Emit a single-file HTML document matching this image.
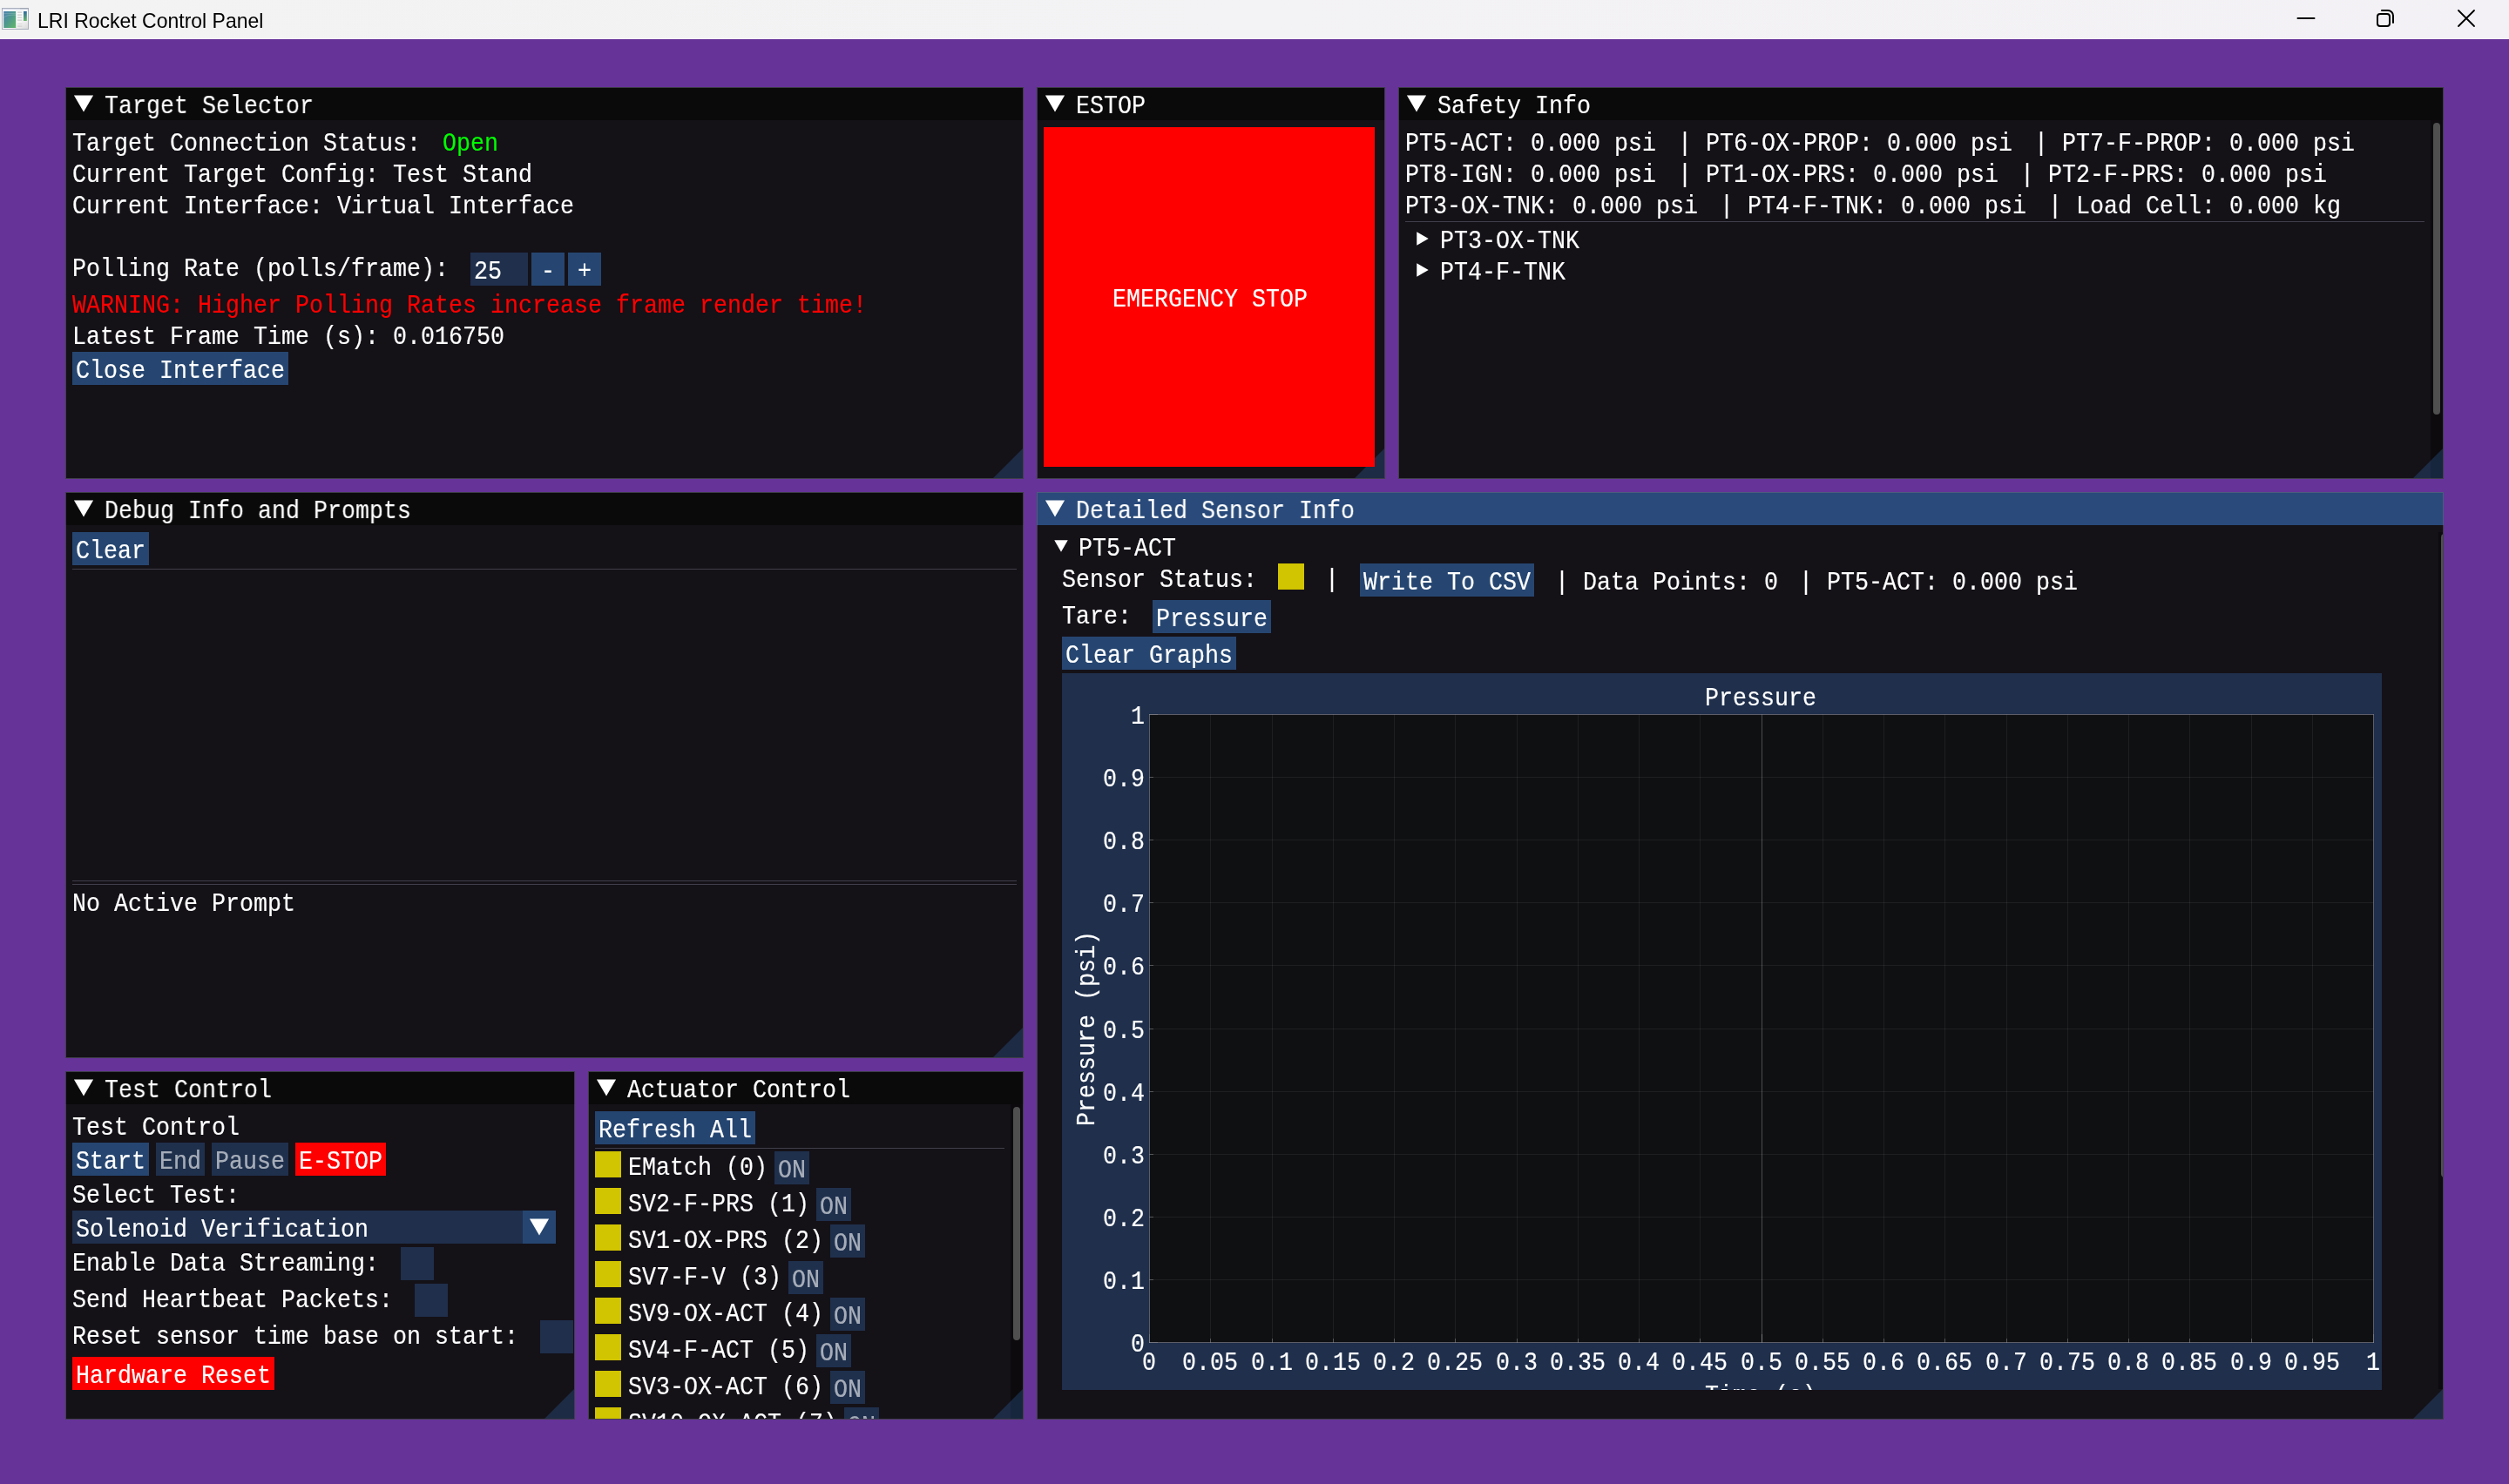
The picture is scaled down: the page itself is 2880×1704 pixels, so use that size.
<!DOCTYPE html>
<html><head><meta charset="utf-8"><title>LRI Rocket Control Panel</title><style>
html,body{margin:0;padding:0}
body{width:2880px;height:1704px;overflow:hidden;background:#663399;position:relative;font-family:"Liberation Mono",monospace}
div,span,svg{position:absolute;display:block}
#root{left:0;top:0;width:2880px;height:1704px;will-change:transform}
.win{background:rgba(15,15,15,.94)}
.clip{overflow:hidden}
.t{font-family:"Liberation Mono",monospace;font-size:30px;line-height:32px;height:32px;white-space:pre;color:#fff;transform-origin:0 0;transform:scaleX(0.88874);-webkit-text-stroke:0.15px currentColor;letter-spacing:0}
.wt{font-family:"Liberation Sans",sans-serif;font-size:24px;line-height:32px;white-space:pre;color:#000;transform-origin:0 0;transform:scaleX(.958)}
</style></head><body>
<div id="root">
<div style="left:0px;top:0px;width:2880px;height:45px;background:linear-gradient(90deg,#f3f3f3,#f3f1f5);"></div>
<div style="left:0px;top:44px;width:2880px;height:1px;background:#f9f9f7;"></div>
<svg style="left:1px;top:8px" width="34" height="28" viewBox="0 0 34 28">
<defs><linearGradient id="g1" x1="0" y1="0" x2="1" y2="1"><stop offset="0" stop-color="#4a7fb0"/><stop offset=".5" stop-color="#4f9a8c"/><stop offset="1" stop-color="#62b866"/></linearGradient>
<linearGradient id="g2" x1="0" y1="0" x2="0" y2="1"><stop offset="0" stop-color="#2f6aa0"/><stop offset="1" stop-color="#66b86a"/></linearGradient>
<linearGradient id="g3" x1="0" y1="0" x2="1" y2="1"><stop offset="0" stop-color="#ffffff"/><stop offset=".6" stop-color="#fafafa"/><stop offset="1" stop-color="#d8d8d8"/></linearGradient></defs>
<rect x="1.5" y="1.5" width="30" height="24" fill="url(#g3)" stroke="#a9afbd" stroke-width="1"/>
<rect x="2" y="2" width="29" height="1.6" fill="#dfe3ee"/><rect x="22" y="1.2" width="9.5" height="1" fill="#9ea3b0"/>
<rect x="3.2" y="5" width="14" height="19" fill="url(#g1)"/>
<path d="M3.4 7.6 H17 M3.4 12.2 C6 9.6 10 9.2 17 9.2" stroke="rgba(255,255,255,.28)" stroke-width=".7" fill="none"/>
<rect x="26" y="5" width="3.8" height="11" fill="url(#g2)"/>
<g fill="#d4d4d6"><rect x="19" y="5.4" width="5.4" height="1.5"/><rect x="19" y="8.4" width="5.4" height="1.5"/><rect x="19" y="11.4" width="5.4" height="1.5"/><rect x="19" y="14.4" width="5.4" height="1.5"/><rect x="19" y="19" width="5.4" height=".8"/><rect x="19" y="21.4" width="5.4" height="1.5"/></g>
</svg>
<span class="wt" style="left:42.6px;top:8px">LRI Rocket Control Panel</span>
<svg style="left:2620px;top:0" width="260" height="45" fill="none" stroke="#000" stroke-width="2" stroke-linecap="round">
<path d="M17.5 21 H36.5"/>
<rect x="109" y="16" width="14" height="14" rx="3"/>
<path d="M114 12 h7 a6 6 0 0 1 6 6 v8"/>
<path d="M202 12 L220 30 M220 12 L202 30" stroke-width="1.8"/>
</svg>
<div class="win" style="left:75px;top:100px;width:1100px;height:450px"><div style="left:0px;top:0px;width:1100px;height:38px;background:#0a0a0a;"></div>
<svg style="left:8px;top:8px" width="26" height="22"><polygon points="13.00,20.60 1.92,1.40 24.08,1.40" fill="#fff"/></svg>
<span class="t" style="left:45.25px;top:5.6px;">Target Selector</span>
<div class="clip" style="left:1px;top:38px;width:1098px;height:411px"><svg style="left:1063px;top:376px" width="37" height="37"><polygon points="1.00,35.00 35.00,1.00 35.00,35.00" fill="rgba(66,150,250,.20)"/></svg>
<span class="t" style="left:7.25px;top:10.6px;">Target Connection Status: </span>
<span class="t" style="left:432.25px;top:10.6px;color:#00ff00;">Open</span>
<span class="t" style="left:7.25px;top:46.6px;">Current Target Config: Test Stand</span>
<span class="t" style="left:7.25px;top:82.6px;">Current Interface: Virtual Interface</span>
<span class="t" style="left:7.25px;top:154.6px;">Polling Rate (polls/frame): </span>
<div style="left:464px;top:152px;width:66px;height:38px;background:rgba(41,74,122,.54);"></div>
<span class="t" style="left:468.25px;top:157.6px;">25</span>
<div style="left:534px;top:152px;width:38px;height:38px;background:rgba(66,150,250,.40);"></div>
<span class="t" style="left:545.25px;top:157.6px;">-</span>
<div style="left:576px;top:152px;width:38px;height:38px;background:rgba(66,150,250,.40);"></div>
<span class="t" style="left:587.25px;top:157.6px;">+</span>
<span class="t" style="left:7.25px;top:196.6px;color:#ff0000;">WARNING: Higher Polling Rates increase frame render time!</span>
<span class="t" style="left:7.25px;top:232.6px;">Latest Frame Time (s): 0.016750</span>
<div style="left:7px;top:266px;width:248px;height:38px;background:rgba(66,150,250,.40);"></div>
<span class="t" style="left:11.25px;top:271.6px;">Close Interface</span></div>
<div style="left:0;top:0;width:1100px;height:450px;box-sizing:border-box;border:1px solid rgba(110,110,128,.5)"></div></div>
<div class="win" style="left:1190px;top:100px;width:400px;height:450px"><div style="left:0px;top:0px;width:400px;height:38px;background:#0a0a0a;"></div>
<svg style="left:8px;top:8px" width="26" height="22"><polygon points="13.00,20.60 1.92,1.40 24.08,1.40" fill="#fff"/></svg>
<span class="t" style="left:45.25px;top:5.6px;">ESTOP</span>
<div class="clip" style="left:1px;top:38px;width:398px;height:411px"><svg style="left:363px;top:376px" width="37" height="37"><polygon points="1.00,35.00 35.00,1.00 35.00,35.00" fill="rgba(66,150,250,.20)"/></svg>
<div style="left:7px;top:8px;width:380px;height:390px;background:#ff0000;"></div>
<span class="t" style="left:86.25px;top:189.6px;">EMERGENCY STOP</span></div>
<div style="left:0;top:0;width:400px;height:450px;box-sizing:border-box;border:1px solid rgba(110,110,128,.5)"></div></div>
<div class="win" style="left:1605px;top:100px;width:1200px;height:450px"><div style="left:0px;top:0px;width:1200px;height:38px;background:#0a0a0a;"></div>
<svg style="left:8px;top:8px" width="26" height="22"><polygon points="13.00,20.60 1.92,1.40 24.08,1.40" fill="#fff"/></svg>
<span class="t" style="left:45.25px;top:5.6px;">Safety Info</span>
<div class="clip" style="left:1px;top:38px;width:1198px;height:411px"><div style="left:1184px;top:0px;width:14px;height:411px;background:rgba(5,5,5,.53);"></div>
<div style="left:1187px;top:3px;width:8px;height:335px;background:#4f4f4f;border-radius:4px;"></div>
<svg style="left:1163px;top:376px" width="37" height="37"><polygon points="1.00,35.00 35.00,1.00 35.00,35.00" fill="rgba(66,150,250,.20)"/></svg>
<span class="t" style="left:7.25px;top:10.6px;">PT5-ACT: 0.000 psi </span>
<span class="t" style="left:320.25px;top:10.6px;">| PT6-OX-PROP: 0.000 psi </span>
<span class="t" style="left:729.25px;top:10.6px;">| PT7-F-PROP: 0.000 psi</span>
<span class="t" style="left:7.25px;top:46.6px;">PT8-IGN: 0.000 psi </span>
<span class="t" style="left:320.25px;top:46.6px;">| PT1-OX-PRS: 0.000 psi </span>
<span class="t" style="left:713.25px;top:46.6px;">| PT2-F-PRS: 0.000 psi</span>
<span class="t" style="left:7.25px;top:82.6px;">PT3-OX-TNK: 0.000 psi </span>
<span class="t" style="left:368.25px;top:82.6px;">| PT4-F-TNK: 0.000 psi </span>
<span class="t" style="left:745.25px;top:82.6px;">| Load Cell: 0.000 kg</span>
<div style="left:7px;top:116px;width:1170px;height:1px;background:rgba(110,110,128,.5);"></div>
<svg style="left:19px;top:127px" width="16" height="18"><polygon points="14.72,9.00 1.28,16.76 1.28,1.24" fill="#fff"/></svg>
<span class="t" style="left:47.25px;top:122.6px;">PT3-OX-TNK</span>
<svg style="left:19px;top:163px" width="16" height="18"><polygon points="14.72,9.00 1.28,16.76 1.28,1.24" fill="#fff"/></svg>
<span class="t" style="left:47.25px;top:158.6px;">PT4-F-TNK</span></div>
<div style="left:0;top:0;width:1200px;height:450px;box-sizing:border-box;border:1px solid rgba(110,110,128,.5)"></div></div>
<div class="win" style="left:75px;top:565px;width:1100px;height:650px"><div style="left:0px;top:0px;width:1100px;height:38px;background:#0a0a0a;"></div>
<svg style="left:8px;top:8px" width="26" height="22"><polygon points="13.00,20.60 1.92,1.40 24.08,1.40" fill="#fff"/></svg>
<span class="t" style="left:45.25px;top:5.6px;">Debug Info and Prompts</span>
<div class="clip" style="left:1px;top:38px;width:1098px;height:611px"><svg style="left:1063px;top:576px" width="37" height="37"><polygon points="1.00,35.00 35.00,1.00 35.00,35.00" fill="rgba(66,150,250,.20)"/></svg>
<div style="left:7px;top:8px;width:88px;height:38px;background:rgba(66,150,250,.40);"></div>
<span class="t" style="left:11.25px;top:13.6px;">Clear</span>
<div style="left:7px;top:50px;width:1084px;height:1px;background:rgba(110,110,128,.5);"></div>
<div style="left:7px;top:408px;width:1084px;height:1px;background:rgba(110,110,128,.5);"></div>
<div style="left:7px;top:412px;width:1084px;height:1px;background:rgba(110,110,128,.5);"></div>
<span class="t" style="left:7.25px;top:418.6px;">No Active Prompt</span></div>
<div style="left:0;top:0;width:1100px;height:650px;box-sizing:border-box;border:1px solid rgba(110,110,128,.5)"></div></div>
<div class="win" style="left:1190px;top:565px;width:1615px;height:1065px"><div style="left:0px;top:0px;width:1615px;height:38px;background:#294a7a;"></div>
<svg style="left:8px;top:8px" width="26" height="22"><polygon points="13.00,20.60 1.92,1.40 24.08,1.40" fill="#fff"/></svg>
<span class="t" style="left:45.25px;top:5.6px;">Detailed Sensor Info</span>
<div class="clip" style="left:1px;top:38px;width:1613px;height:1026px"><svg style="left:1578px;top:991px" width="37" height="37"><polygon points="1.00,35.00 35.00,1.00 35.00,35.00" fill="rgba(66,150,250,.20)"/></svg>
<div style="left:1608px;top:8px;width:6px;height:984px;background:rgba(5,5,5,.53);"></div>
<div style="left:1611px;top:10px;width:8px;height:739px;background:#4f4f4f;border-radius:4px;"></div>
<svg style="left:18px;top:16px" width="18" height="16"><polygon points="9.00,14.72 1.24,1.28 16.76,1.28" fill="#fff"/></svg>
<span class="t" style="left:47.25px;top:10.6px;">PT5-ACT</span>
<span class="t" style="left:28.25px;top:46.6px;">Sensor Status: </span>
<div style="left:276px;top:44px;width:30px;height:30px;background:rgb(209,196,0);"></div>
<span class="t" style="left:314.25px;top:46.6px;"> | </span>
<div style="left:370px;top:44px;width:200px;height:38px;background:rgba(66,150,250,.40);"></div>
<span class="t" style="left:374.25px;top:49.6px;">Write To CSV</span>
<span class="t" style="left:578.25px;top:49.6px;"> | Data Points: 0 </span>
<span class="t" style="left:874.25px;top:49.6px;">| PT5-ACT: 0.000 psi</span>
<span class="t" style="left:28.25px;top:88.6px;">Tare: </span>
<div style="left:132px;top:86px;width:136px;height:38px;background:rgba(66,150,250,.40);"></div>
<span class="t" style="left:136.25px;top:91.6px;">Pressure</span>
<div style="left:28px;top:128px;width:200px;height:38px;background:rgba(66,150,250,.40);"></div>
<span class="t" style="left:32.25px;top:133.6px;">Clear Graphs</span>
<div class="clip" style="left:28px;top:170px;width:1515px;height:823px"><div style="left:0px;top:0px;width:1515px;height:860px;background:rgba(41,74,122,.54);"></div>
<div style="left:100px;top:47px;width:1406px;height:722px;background:rgba(15,15,15,.94);"></div>
<div style="left:100px;top:47px;width:1px;height:722px;background:rgba(255,255,255,.25);"></div>
<div style="left:170px;top:47px;width:1px;height:722px;background:rgba(255,255,255,.0625);"></div>
<div style="left:241px;top:47px;width:1px;height:722px;background:rgba(255,255,255,.0625);"></div>
<div style="left:311px;top:47px;width:1px;height:722px;background:rgba(255,255,255,.0625);"></div>
<div style="left:381px;top:47px;width:1px;height:722px;background:rgba(255,255,255,.0625);"></div>
<div style="left:451px;top:47px;width:1px;height:722px;background:rgba(255,255,255,.0625);"></div>
<div style="left:522px;top:47px;width:1px;height:722px;background:rgba(255,255,255,.0625);"></div>
<div style="left:592px;top:47px;width:1px;height:722px;background:rgba(255,255,255,.0625);"></div>
<div style="left:662px;top:47px;width:1px;height:722px;background:rgba(255,255,255,.0625);"></div>
<div style="left:732px;top:47px;width:1px;height:722px;background:rgba(255,255,255,.0625);"></div>
<div style="left:803px;top:47px;width:1px;height:722px;background:rgba(255,255,255,.25);"></div>
<div style="left:873px;top:47px;width:1px;height:722px;background:rgba(255,255,255,.0625);"></div>
<div style="left:943px;top:47px;width:1px;height:722px;background:rgba(255,255,255,.0625);"></div>
<div style="left:1013px;top:47px;width:1px;height:722px;background:rgba(255,255,255,.0625);"></div>
<div style="left:1084px;top:47px;width:1px;height:722px;background:rgba(255,255,255,.0625);"></div>
<div style="left:1154px;top:47px;width:1px;height:722px;background:rgba(255,255,255,.0625);"></div>
<div style="left:1224px;top:47px;width:1px;height:722px;background:rgba(255,255,255,.0625);"></div>
<div style="left:1294px;top:47px;width:1px;height:722px;background:rgba(255,255,255,.0625);"></div>
<div style="left:1365px;top:47px;width:1px;height:722px;background:rgba(255,255,255,.0625);"></div>
<div style="left:1435px;top:47px;width:1px;height:722px;background:rgba(255,255,255,.0625);"></div>
<div style="left:1505px;top:47px;width:1px;height:722px;background:rgba(255,255,255,.25);"></div>
<div style="left:100px;top:47px;width:1406px;height:1px;background:rgba(255,255,255,.25);"></div>
<div style="left:100px;top:119px;width:1406px;height:1px;background:rgba(255,255,255,.0625);"></div>
<div style="left:100px;top:191px;width:1406px;height:1px;background:rgba(255,255,255,.0625);"></div>
<div style="left:100px;top:263px;width:1406px;height:1px;background:rgba(255,255,255,.0625);"></div>
<div style="left:100px;top:335px;width:1406px;height:1px;background:rgba(255,255,255,.0625);"></div>
<div style="left:100px;top:408px;width:1406px;height:1px;background:rgba(255,255,255,.0625);"></div>
<div style="left:100px;top:480px;width:1406px;height:1px;background:rgba(255,255,255,.0625);"></div>
<div style="left:100px;top:552px;width:1406px;height:1px;background:rgba(255,255,255,.0625);"></div>
<div style="left:100px;top:624px;width:1406px;height:1px;background:rgba(255,255,255,.0625);"></div>
<div style="left:100px;top:696px;width:1406px;height:1px;background:rgba(255,255,255,.0625);"></div>
<div style="left:100px;top:768px;width:1406px;height:1px;background:rgba(255,255,255,.25);"></div>
<div style="left:100px;top:759px;width:1px;height:10px;background:rgba(255,255,255,.25);"></div>
<div style="left:170px;top:764px;width:1px;height:5px;background:rgba(255,255,255,.25);"></div>
<div style="left:241px;top:764px;width:1px;height:5px;background:rgba(255,255,255,.25);"></div>
<div style="left:311px;top:764px;width:1px;height:5px;background:rgba(255,255,255,.25);"></div>
<div style="left:381px;top:764px;width:1px;height:5px;background:rgba(255,255,255,.25);"></div>
<div style="left:451px;top:764px;width:1px;height:5px;background:rgba(255,255,255,.25);"></div>
<div style="left:522px;top:764px;width:1px;height:5px;background:rgba(255,255,255,.25);"></div>
<div style="left:592px;top:764px;width:1px;height:5px;background:rgba(255,255,255,.25);"></div>
<div style="left:662px;top:764px;width:1px;height:5px;background:rgba(255,255,255,.25);"></div>
<div style="left:732px;top:764px;width:1px;height:5px;background:rgba(255,255,255,.25);"></div>
<div style="left:803px;top:759px;width:1px;height:10px;background:rgba(255,255,255,.25);"></div>
<div style="left:873px;top:764px;width:1px;height:5px;background:rgba(255,255,255,.25);"></div>
<div style="left:943px;top:764px;width:1px;height:5px;background:rgba(255,255,255,.25);"></div>
<div style="left:1013px;top:764px;width:1px;height:5px;background:rgba(255,255,255,.25);"></div>
<div style="left:1084px;top:764px;width:1px;height:5px;background:rgba(255,255,255,.25);"></div>
<div style="left:1154px;top:764px;width:1px;height:5px;background:rgba(255,255,255,.25);"></div>
<div style="left:1224px;top:764px;width:1px;height:5px;background:rgba(255,255,255,.25);"></div>
<div style="left:1294px;top:764px;width:1px;height:5px;background:rgba(255,255,255,.25);"></div>
<div style="left:1365px;top:764px;width:1px;height:5px;background:rgba(255,255,255,.25);"></div>
<div style="left:1435px;top:764px;width:1px;height:5px;background:rgba(255,255,255,.25);"></div>
<div style="left:1505px;top:759px;width:1px;height:10px;background:rgba(255,255,255,.25);"></div>
<div style="left:100px;top:47px;width:10px;height:1px;background:rgba(255,255,255,.25);"></div>
<div style="left:100px;top:119px;width:5px;height:1px;background:rgba(255,255,255,.25);"></div>
<div style="left:100px;top:191px;width:5px;height:1px;background:rgba(255,255,255,.25);"></div>
<div style="left:100px;top:263px;width:5px;height:1px;background:rgba(255,255,255,.25);"></div>
<div style="left:100px;top:335px;width:5px;height:1px;background:rgba(255,255,255,.25);"></div>
<div style="left:100px;top:408px;width:5px;height:1px;background:rgba(255,255,255,.25);"></div>
<div style="left:100px;top:480px;width:5px;height:1px;background:rgba(255,255,255,.25);"></div>
<div style="left:100px;top:552px;width:5px;height:1px;background:rgba(255,255,255,.25);"></div>
<div style="left:100px;top:624px;width:5px;height:1px;background:rgba(255,255,255,.25);"></div>
<div style="left:100px;top:696px;width:5px;height:1px;background:rgba(255,255,255,.25);"></div>
<div style="left:100px;top:768px;width:10px;height:1px;background:rgba(255,255,255,.25);"></div>
<div style="left:100px;top:47px;width:1406px;height:722px;box-sizing:border-box;border:1px solid rgba(110,110,128,.5)"></div>
<span class="t" style="left:738.25px;top:13.1px;">Pressure</span>
<span class="t" style="left:79.25px;top:34.1px;">1</span>
<span class="t" style="left:47.25px;top:106.1px;">0.9</span>
<span class="t" style="left:47.25px;top:178.1px;">0.8</span>
<span class="t" style="left:47.25px;top:250.1px;">0.7</span>
<span class="t" style="left:47.25px;top:322.1px;">0.6</span>
<span class="t" style="left:47.25px;top:395.1px;">0.5</span>
<span class="t" style="left:47.25px;top:467.1px;">0.4</span>
<span class="t" style="left:47.25px;top:539.1px;">0.3</span>
<span class="t" style="left:47.25px;top:611.1px;">0.2</span>
<span class="t" style="left:47.25px;top:683.1px;">0.1</span>
<span class="t" style="left:79.25px;top:755.1px;">0</span>
<span class="t" style="left:92.25px;top:776.1px;">0</span>
<span class="t" style="left:138.25px;top:776.1px;">0.05</span>
<span class="t" style="left:217.25px;top:776.1px;">0.1</span>
<span class="t" style="left:279.25px;top:776.1px;">0.15</span>
<span class="t" style="left:357.25px;top:776.1px;">0.2</span>
<span class="t" style="left:419.25px;top:776.1px;">0.25</span>
<span class="t" style="left:498.25px;top:776.1px;">0.3</span>
<span class="t" style="left:560.25px;top:776.1px;">0.35</span>
<span class="t" style="left:638.25px;top:776.1px;">0.4</span>
<span class="t" style="left:700.25px;top:776.1px;">0.45</span>
<span class="t" style="left:779.25px;top:776.1px;">0.5</span>
<span class="t" style="left:841.25px;top:776.1px;">0.55</span>
<span class="t" style="left:919.25px;top:776.1px;">0.6</span>
<span class="t" style="left:981.25px;top:776.1px;">0.65</span>
<span class="t" style="left:1060.25px;top:776.1px;">0.7</span>
<span class="t" style="left:1122.25px;top:776.1px;">0.75</span>
<span class="t" style="left:1200.25px;top:776.1px;">0.8</span>
<span class="t" style="left:1262.25px;top:776.1px;">0.85</span>
<span class="t" style="left:1341.25px;top:776.1px;">0.9</span>
<span class="t" style="left:1403.25px;top:776.1px;">0.95</span>
<span class="t" style="left:1497.25px;top:776.1px;">1</span>
<span class="t" style="left:738.25px;top:813.6px;">Time (s)</span>
<span class="t" style="left:12.6px;top:520px;transform-origin:0 0;transform:rotate(-90deg) scaleX(0.88874)">Pressure (psi)</span></div></div>
<div style="left:0;top:0;width:1615px;height:1065px;box-sizing:border-box;border:1px solid rgba(110,110,128,.5)"></div></div>
<div class="win" style="left:75px;top:1230px;width:585px;height:400px"><div style="left:0px;top:0px;width:585px;height:38px;background:#0a0a0a;"></div>
<svg style="left:8px;top:8px" width="26" height="22"><polygon points="13.00,20.60 1.92,1.40 24.08,1.40" fill="#fff"/></svg>
<span class="t" style="left:45.25px;top:5.6px;">Test Control</span>
<div class="clip" style="left:1px;top:38px;width:583px;height:361px"><svg style="left:548px;top:326px" width="37" height="37"><polygon points="1.00,35.00 35.00,1.00 35.00,35.00" fill="rgba(66,150,250,.20)"/></svg>
<span class="t" style="left:7.25px;top:10.6px;">Test Control</span>
<div style="left:7px;top:44px;width:88px;height:38px;background:rgba(66,150,250,.40);"></div>
<span class="t" style="left:11.25px;top:49.6px;">Start</span>
<div style="left:103px;top:44px;width:56px;height:38px;background:rgba(66,150,250,.24);"></div>
<span class="t" style="left:107.25px;top:49.6px;color:rgba(255,255,255,.6);">End</span>
<div style="left:167px;top:44px;width:88px;height:38px;background:rgba(66,150,250,.24);"></div>
<span class="t" style="left:171.25px;top:49.6px;color:rgba(255,255,255,.6);">Pause</span>
<div style="left:263px;top:44px;width:104px;height:38px;background:#ff0000;"></div>
<span class="t" style="left:267.25px;top:49.6px;">E-STOP</span>
<span class="t" style="left:7.25px;top:88.6px;">Select Test:</span>
<div style="left:7px;top:122px;width:517px;height:38px;background:rgba(41,74,122,.54);"></div>
<div style="left:524px;top:122px;width:38px;height:38px;background:rgba(66,150,250,.40);"></div>
<span class="t" style="left:11.25px;top:127.6px;">Solenoid Verification</span>
<svg style="left:530px;top:130px" width="26" height="22"><polygon points="13.00,20.60 1.92,1.40 24.08,1.40" fill="#fff"/></svg>
<span class="t" style="left:7.25px;top:166.6px;">Enable Data Streaming: </span>
<div style="left:384px;top:164px;width:38px;height:38px;background:rgba(41,74,122,.54);"></div>
<span class="t" style="left:7.25px;top:208.6px;">Send Heartbeat Packets: </span>
<div style="left:400px;top:206px;width:38px;height:38px;background:rgba(41,74,122,.54);"></div>
<span class="t" style="left:7.25px;top:250.6px;">Reset sensor time base on start: </span>
<div style="left:544px;top:248px;width:38px;height:38px;background:rgba(41,74,122,.54);"></div>
<div style="left:7px;top:290px;width:232px;height:38px;background:#ff0000;"></div>
<span class="t" style="left:11.25px;top:295.6px;">Hardware Reset</span></div>
<div style="left:0;top:0;width:585px;height:400px;box-sizing:border-box;border:1px solid rgba(110,110,128,.5)"></div></div>
<div class="win" style="left:675px;top:1230px;width:500px;height:400px"><div style="left:0px;top:0px;width:500px;height:38px;background:#0a0a0a;"></div>
<svg style="left:8px;top:8px" width="26" height="22"><polygon points="13.00,20.60 1.92,1.40 24.08,1.40" fill="#fff"/></svg>
<span class="t" style="left:45.25px;top:5.6px;">Actuator Control</span>
<div class="clip" style="left:1px;top:38px;width:498px;height:361px"><div style="left:484px;top:0px;width:14px;height:361px;background:rgba(5,5,5,.53);"></div>
<div style="left:487px;top:3px;width:8px;height:268px;background:#4f4f4f;border-radius:4px;"></div>
<svg style="left:463px;top:326px" width="37" height="37"><polygon points="1.00,35.00 35.00,1.00 35.00,35.00" fill="rgba(66,150,250,.20)"/></svg>
<div style="left:7px;top:8px;width:184px;height:38px;background:rgba(66,150,250,.40);"></div>
<span class="t" style="left:11.25px;top:13.6px;">Refresh All</span>
<div style="left:7px;top:50px;width:470px;height:1px;background:rgba(110,110,128,.5);"></div>
<div style="left:7px;top:54px;width:30px;height:30px;background:rgb(209,196,0);"></div>
<span class="t" style="left:45.25px;top:56.6px;">EMatch (0)</span>
<div style="left:213px;top:54px;width:40px;height:38px;background:rgba(66,150,250,.24);"></div>
<span class="t" style="left:217.25px;top:59.6px;color:rgba(255,255,255,.6);">ON</span>
<div style="left:7px;top:96px;width:30px;height:30px;background:rgb(209,196,0);"></div>
<span class="t" style="left:45.25px;top:98.6px;">SV2-F-PRS (1)</span>
<div style="left:261px;top:96px;width:40px;height:38px;background:rgba(66,150,250,.24);"></div>
<span class="t" style="left:265.25px;top:101.6px;color:rgba(255,255,255,.6);">ON</span>
<div style="left:7px;top:138px;width:30px;height:30px;background:rgb(209,196,0);"></div>
<span class="t" style="left:45.25px;top:140.6px;">SV1-OX-PRS (2)</span>
<div style="left:277px;top:138px;width:40px;height:38px;background:rgba(66,150,250,.24);"></div>
<span class="t" style="left:281.25px;top:143.6px;color:rgba(255,255,255,.6);">ON</span>
<div style="left:7px;top:180px;width:30px;height:30px;background:rgb(209,196,0);"></div>
<span class="t" style="left:45.25px;top:182.6px;">SV7-F-V (3)</span>
<div style="left:229px;top:180px;width:40px;height:38px;background:rgba(66,150,250,.24);"></div>
<span class="t" style="left:233.25px;top:185.6px;color:rgba(255,255,255,.6);">ON</span>
<div style="left:7px;top:222px;width:30px;height:30px;background:rgb(209,196,0);"></div>
<span class="t" style="left:45.25px;top:224.6px;">SV9-OX-ACT (4)</span>
<div style="left:277px;top:222px;width:40px;height:38px;background:rgba(66,150,250,.24);"></div>
<span class="t" style="left:281.25px;top:227.6px;color:rgba(255,255,255,.6);">ON</span>
<div style="left:7px;top:264px;width:30px;height:30px;background:rgb(209,196,0);"></div>
<span class="t" style="left:45.25px;top:266.6px;">SV4-F-ACT (5)</span>
<div style="left:261px;top:264px;width:40px;height:38px;background:rgba(66,150,250,.24);"></div>
<span class="t" style="left:265.25px;top:269.6px;color:rgba(255,255,255,.6);">ON</span>
<div style="left:7px;top:306px;width:30px;height:30px;background:rgb(209,196,0);"></div>
<span class="t" style="left:45.25px;top:308.6px;">SV3-OX-ACT (6)</span>
<div style="left:277px;top:306px;width:40px;height:38px;background:rgba(66,150,250,.24);"></div>
<span class="t" style="left:281.25px;top:311.6px;color:rgba(255,255,255,.6);">ON</span>
<div style="left:7px;top:348px;width:30px;height:30px;background:rgb(209,196,0);"></div>
<span class="t" style="left:45.25px;top:350.6px;">SV10-OX-ACT (7)</span>
<div style="left:293px;top:348px;width:40px;height:38px;background:rgba(66,150,250,.24);"></div>
<span class="t" style="left:297.25px;top:353.6px;color:rgba(255,255,255,.6);">ON</span></div>
<div style="left:0;top:0;width:500px;height:400px;box-sizing:border-box;border:1px solid rgba(110,110,128,.5)"></div></div>
</div>
</body></html>
